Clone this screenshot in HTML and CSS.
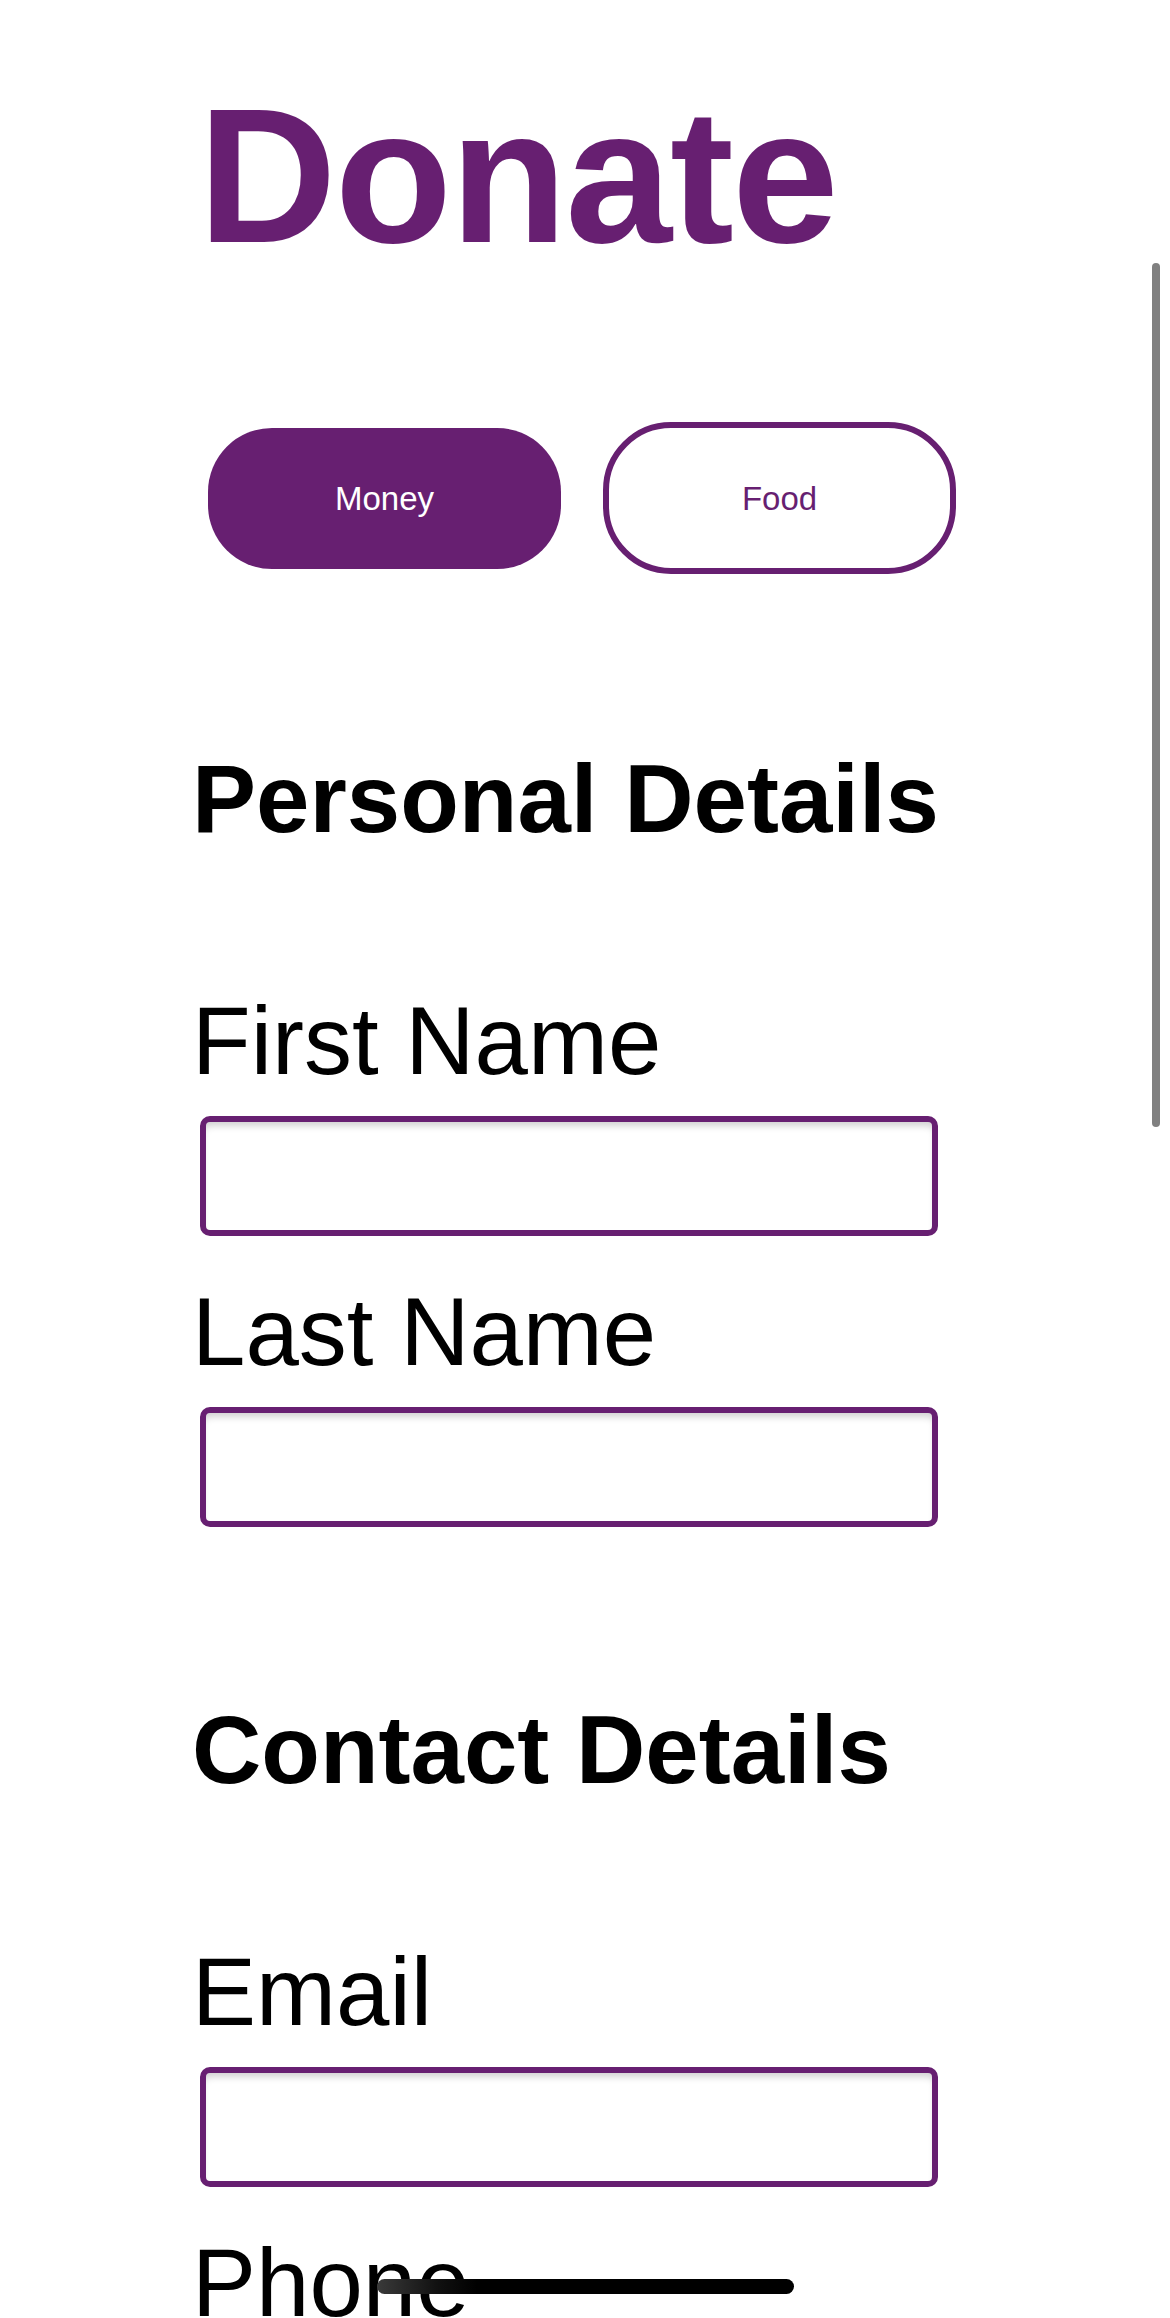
FILE: index.html
```html
<!DOCTYPE html>
<html lang="en">
<head>
<meta charset="utf-8">
<title>Donate</title>
<link rel="stylesheet" href="styles.css">
</head>
<body>
<main class="page">
  <h1 class="title">Donate</h1>

  <div class="toggle">
    <button class="toggle-btn toggle-btn--active" type="button">Money</button>
    <button class="toggle-btn toggle-btn--outline" type="button">Food</button>
  </div>

  <section class="form-section form-section--first">
    <h2 class="section-title">Personal Details</h2>
    <div class="fields">
      <div class="field">
        <label class="field-label" for="first">First Name</label>
        <input class="field-input" id="first" type="text">
      </div>
      <div class="field">
        <label class="field-label" for="last">Last Name</label>
        <input class="field-input" id="last" type="text">
      </div>
    </div>
  </section>

  <section class="form-section">
    <h2 class="section-title">Contact Details</h2>
    <div class="fields">
      <div class="field">
        <label class="field-label" for="email">Email</label>
        <input class="field-input" id="email" type="email">
      </div>
      <div class="field">
        <label class="field-label" for="phone">Phone</label>
        <input class="field-input" id="phone" type="tel">
      </div>
    </div>
  </section>
</main>

<div class="scrollbar"></div>
<div class="home-indicator"></div>
</body>
</html>
```

FILE: styles.css
```css
html, body {
  margin: 0;
  padding: 0;
  height: 100%;
  overflow: hidden;
  background: #ffffff;
}

body {
  font-family: "Liberation Sans", Arial, Helvetica, sans-serif;
  color: #000000;
  position: relative;
}

.page {
  padding: 80px 0 0 192px;
  display: flex;
  flex-direction: column;
  align-items: flex-start;
}

.title {
  margin: 0 0 0 6px;
  font-size: 192px;
  line-height: 192px;
  height: 192px;
  font-weight: 700;
  letter-spacing: -2px;
  color: #671f71;
  white-space: nowrap;
}

.toggle {
  margin-top: 150px;
  padding-left: 16px;
  display: flex;
  align-items: center;
  gap: 42px;
  height: 152px;
}

.toggle-btn {
  font-family: "Liberation Sans", Arial, Helvetica, sans-serif;
  font-size: 33px;
  line-height: 33px;
  padding: 0;
  margin: 0;
  display: flex;
  align-items: center;
  justify-content: center;
  box-sizing: border-box;
  cursor: pointer;
}

.toggle-btn--active {
  width: 353px;
  height: 141px;
  border: none;
  border-radius: 64px;
  background: #671f71;
  color: #ffffff;
}

.toggle-btn--outline {
  width: 353px;
  height: 152px;
  border: 6px solid #671f71;
  border-radius: 68px;
  background: #ffffff;
  color: #671f71;
}

.form-section {
  display: flex;
  flex-direction: column;
  align-items: flex-start;
  gap: 146px;
  margin-top: 175px;
}

.form-section--first {
  margin-top: 177px;
}

.section-title {
  margin: 0;
  font-size: 96px;
  line-height: 96px;
  height: 96px;
  font-weight: 700;
  white-space: nowrap;
}

.fields {
  display: flex;
  flex-direction: column;
  gap: 48px;
}

.field {
  display: flex;
  flex-direction: column;
  align-items: flex-start;
  gap: 27px;
}

.field-label {
  font-size: 96px;
  line-height: 96px;
  height: 96px;
  font-weight: 400;
  white-space: nowrap;
}

.field-input {
  display: block;
  box-sizing: border-box;
  width: 738px;
  height: 120px;
  margin: 0 0 0 8px;
  padding: 0 16px;
  border: 6px solid #671f71;
  border-radius: 10px;
  background: #ffffff;
  box-shadow: inset 0 7px 7px -3px rgba(0, 0, 0, 0.18);
  font-family: "Liberation Sans", Arial, sans-serif;
  font-size: 40px;
  outline: none;
}

.scrollbar {
  position: absolute;
  left: 1152px;
  top: 263px;
  width: 8px;
  height: 864px;
  border-radius: 4px;
  background: #808080;
}

.home-indicator {
  position: absolute;
  left: 377px;
  top: 2279px;
  width: 417px;
  height: 15px;
  border-radius: 8px;
  background: linear-gradient(to right, #3a3a3a 0, #111111 60px, #000000 100px);
}
```
